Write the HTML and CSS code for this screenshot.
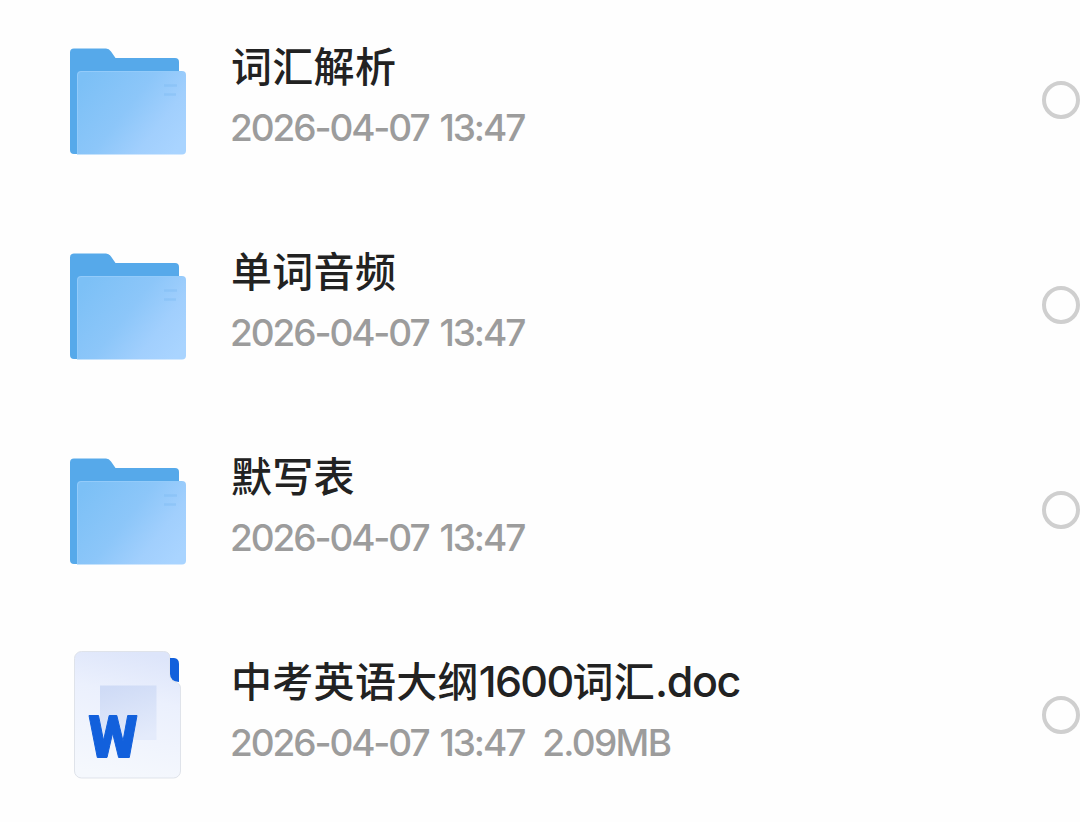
FILE: index.html
```html
<!DOCTYPE html>
<html lang="zh-CN">
<head>
  <meta charset="UTF-8">
  <meta name="viewport" content="width=device-width, initial-scale=1.0">
  <title>文件列表</title>
  <link rel="stylesheet" href="styles.css">
</head>
<body>
  <!-- shared folder icon -->
  <svg class="defs" width="0" height="0">
    <defs>
      <linearGradient id="folder-front" x1="0" y1="0.2" x2="1" y2="0.8">
        <stop offset="0" stop-color="#7cc0f6"/>
        <stop offset="0.45" stop-color="#8cc6f9"/>
        <stop offset="0.75" stop-color="#a1cffd"/>
        <stop offset="1" stop-color="#a9d4ff"/>
      </linearGradient>
      <symbol id="folder" viewBox="0 0 120 130">
        <path d="M0 16.500a4 4 0 0 1 4-4h32q3 0 5 3l4.500 6.500h59.500a4 4 0 0 1 4 4v92H4a4 4 0 0 1-4-4z" fill="#56a9ea"/>
        <path d="M7 39a4 4 0 0 1 4-4h101a4 4 0 0 1 4 4v75.500a4 4 0 0 1-4 4H7z" fill="url(#folder-front)"/>
        <path d="M7.500 118V39a3.500 3.500 0 0 1 3.500-3.500h101" fill="none" stroke="#93cbfa" stroke-width="1"/>
        <path d="M94 49.500h13M94 58.500h12" stroke="#7fbcf3" stroke-width="2.500" opacity="0.45"/>
      </symbol>
    </defs>
  </svg>

  <ul class="file-list">
    <li class="file-row">
      <svg class="file-icon"><use href="#folder"/></svg>
      <div class="file-info">
        <div class="file-name">词汇解析</div>
        <div class="file-meta"><span class="date">2026-04-07</span><span class="time">13:47</span></div>
      </div>
      <span class="check"></span>
    </li>
    <li class="file-row">
      <svg class="file-icon"><use href="#folder"/></svg>
      <div class="file-info">
        <div class="file-name">单词音频</div>
        <div class="file-meta"><span class="date">2026-04-07</span><span class="time">13:47</span></div>
      </div>
      <span class="check"></span>
    </li>
    <li class="file-row">
      <svg class="file-icon"><use href="#folder"/></svg>
      <div class="file-info">
        <div class="file-name">默写表</div>
        <div class="file-meta"><span class="date">2026-04-07</span><span class="time">13:47</span></div>
      </div>
      <span class="check"></span>
    </li>
    <li class="file-row">
      <svg class="file-icon" viewBox="0 0 120 130">
        <defs>
          <linearGradient id="doc-page" x1="0.6" y1="0" x2="0.4" y2="1">
            <stop offset="0" stop-color="#dde5fa"/>
            <stop offset="0.35" stop-color="#ebf0fd"/>
            <stop offset="1" stop-color="#f5f8fd"/>
          </linearGradient>
          <linearGradient id="doc-square" x1="0.3" y1="0" x2="0.6" y2="1">
            <stop offset="0" stop-color="#cfdbf6"/>
            <stop offset="1" stop-color="#e4ebfb"/>
          </linearGradient>
        </defs>
        <path d="M4.500 9.500a7 7 0 0 1 7-7h82q6 0 6.500 6v17q0 6 5 7.500 5.500 1.500 5.500 6v83a7 7 0 0 1-7 7h-92a7 7 0 0 1-7-7z" fill="url(#doc-page)" stroke="#dfe3ea"/>
        <path d="M100 9h4q5 0.500 5 6v18q-9-1-9-8z" fill="#1260dc"/>
        <path d="M30 36.500h56.500v54.500H30z" fill="url(#doc-square)"/>
        <path d="M19 66.500h9.500l5 25L39.200 66.500h7.600l6.200 25.500L57.700 66.500h9.300l-7.700 42H48.600L42.600 84l-5.600 24.500h-9.700z" fill="#1260dc" stroke="#1260dc" stroke-width="1" stroke-linejoin="round"/>
      </svg>
      <div class="file-info">
        <div class="file-name">中考英语大纲<span class="num">1600</span>词汇<span class="ext">.doc</span></div>
        <div class="file-meta"><span class="date">2026-04-07</span><span class="time">13:47</span><span class="size">2.09MB</span></div>
      </div>
      <span class="check"></span>
    </li>
  </ul>
</body>
</html>
```

FILE: styles.css
```css
* {
  box-sizing: border-box;
}
body {
  margin: 0;
  background-color: #fefefe;
  font-family: Inter, "Noto Sans CJK SC", sans-serif;
  overflow: hidden;
}
.defs {
  display: block;
}
.file-list {
  list-style: none;
  margin: 0;
  padding: 0 0 0 70px;
}
.file-row {
  display: flex;
  align-items: flex-start;
  height: 205px;
  padding-top: 36px;
}
.file-row:last-child {
  padding-top: 34px;
}
.file-icon {
  width: 120px;
  height: 130px;
  flex: none;
}
.file-info {
  flex: 1;
  margin-left: 41px;
}
.file-row:last-child .file-info {
  padding-top: 2px;
}
.file-name {
  height: 62px;
  line-height: 56px;
  font-size: 41px;
  font-weight: 500;
  font-family: "Noto Sans CJK SC", sans-serif;
  letter-spacing: 0.3px;
  color: #222;
  white-space: nowrap;
}
.num,
.ext {
  font-family: Inter, sans-serif;
  font-size: 43px;
  line-height: 1;
  font-weight: 450;
  letter-spacing: -1.7px;
}
.ext {
  letter-spacing: -1.4px;
}
.file-meta {
  display: flex;
  height: 60px;
  line-height: 60px;
  margin-left: -1px;
  font-size: 37px;
  font-weight: 450;
  letter-spacing: -2.1px;
  color: #9c9c9c;
  white-space: nowrap;
}
.time {
  margin-left: 11px;
}
.size {
  margin-left: 18px;
  letter-spacing: -1.7px;
}
.check {
  flex: none;
  width: 38px;
  height: 38px;
  margin-top: 45px;
  border: 4px solid #cfcfcf;
  border-radius: 50%;
}
.file-row:last-child .check {
  margin-top: 47px;
}
```
